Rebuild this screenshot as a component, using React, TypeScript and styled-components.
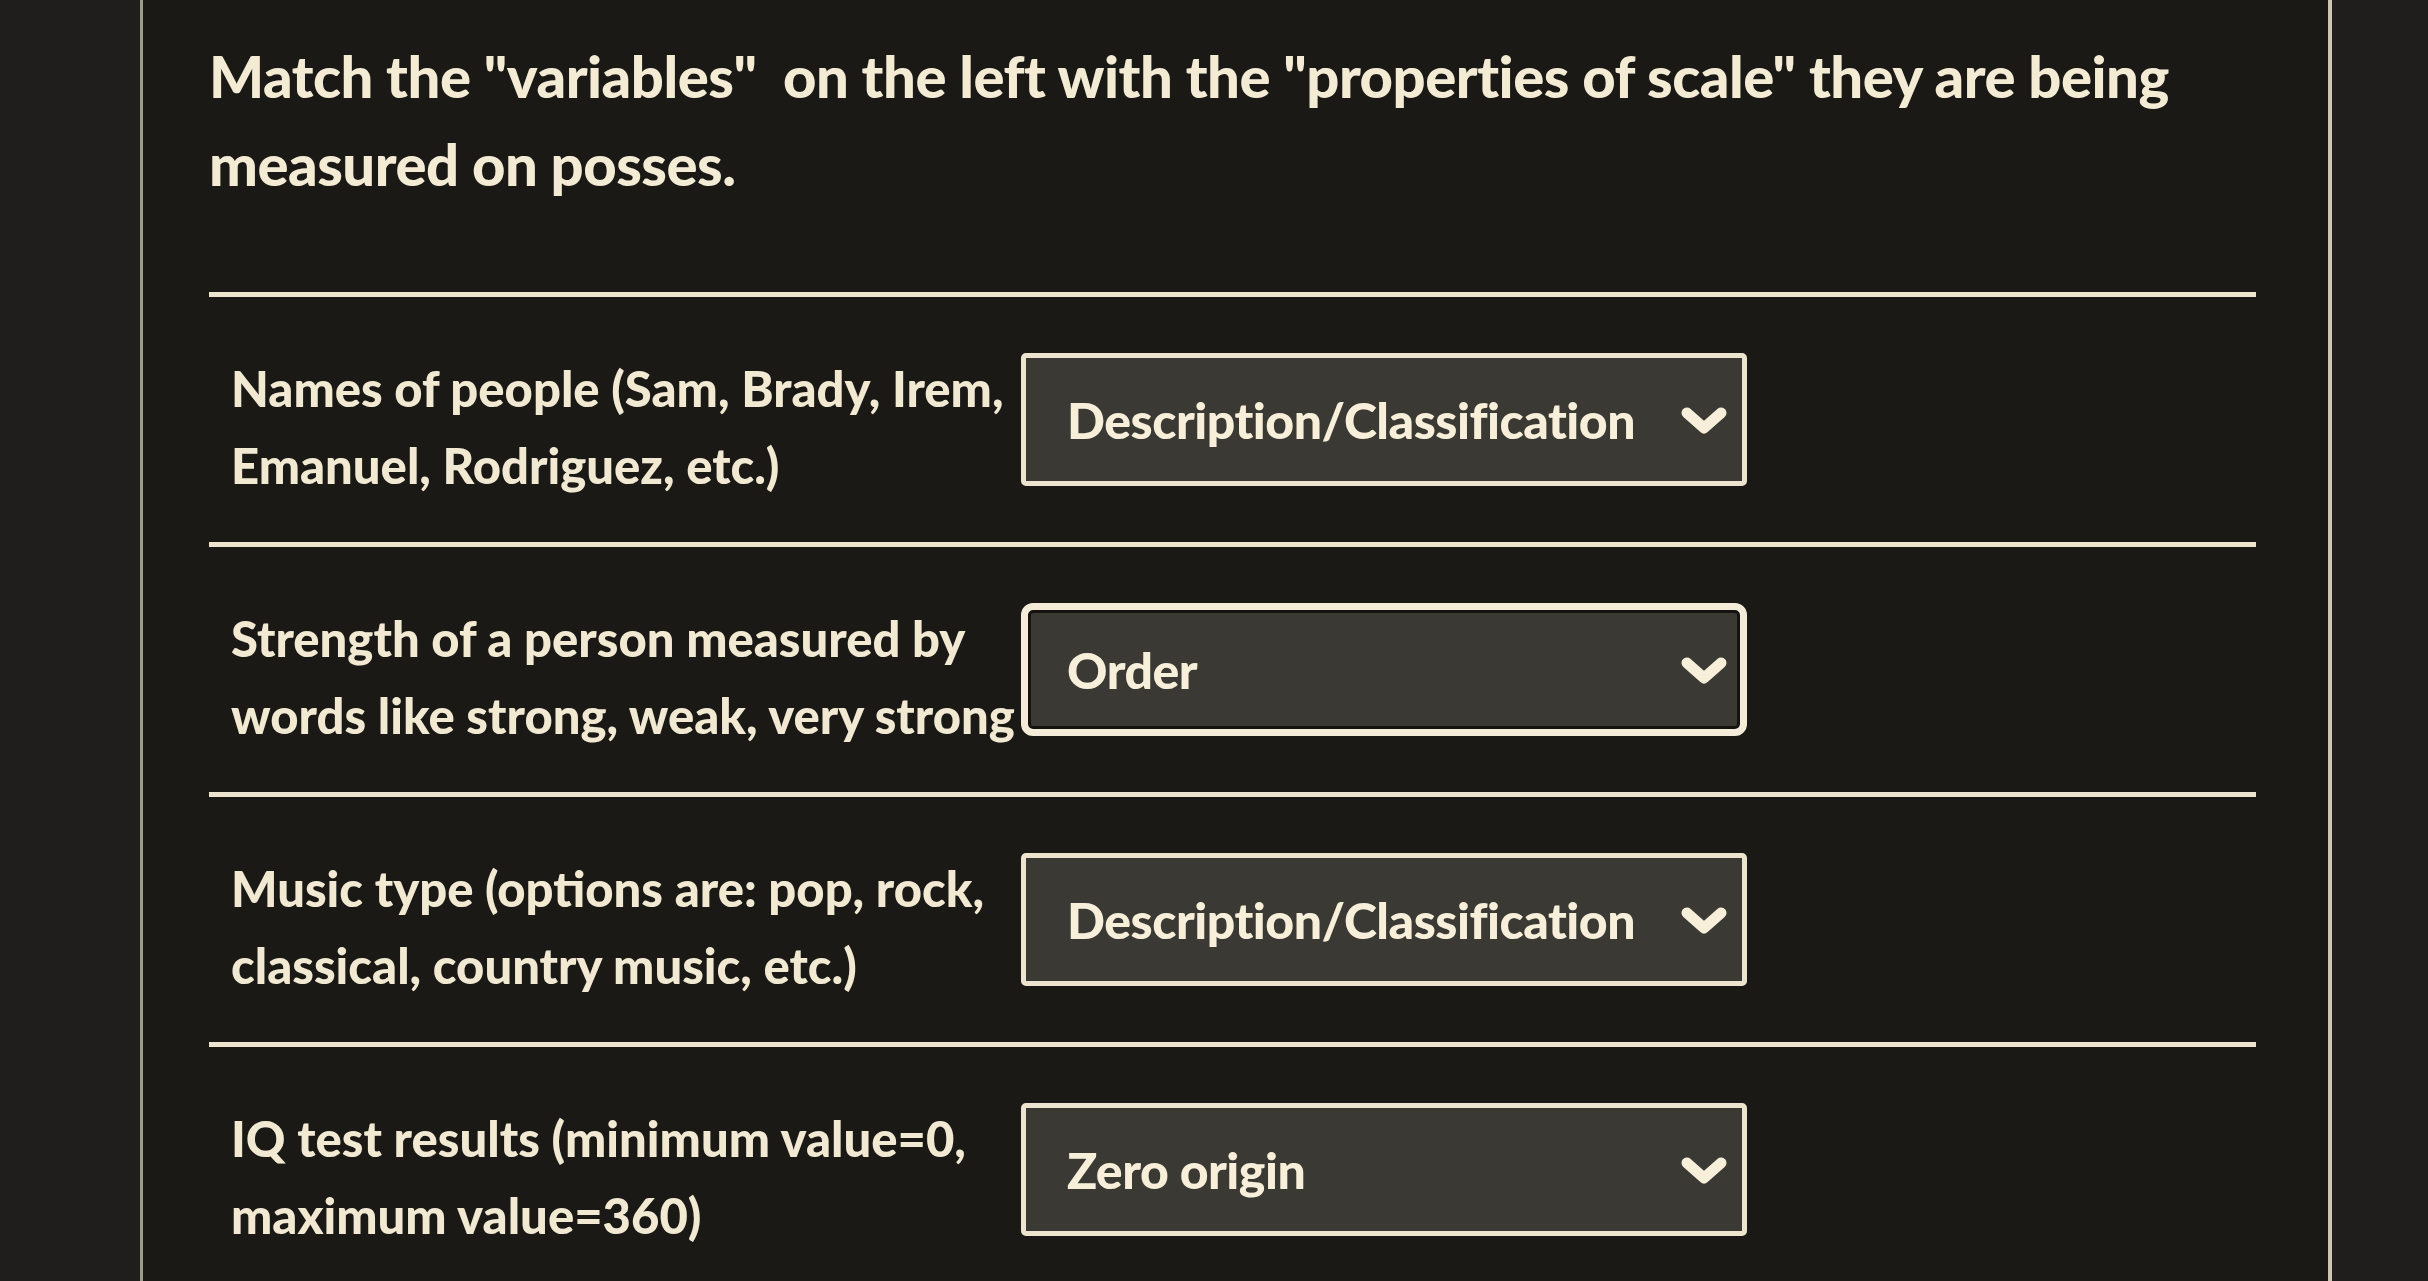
import React from "react";
import styled, { createGlobalStyle, css } from "styled-components";

const GlobalStyle = createGlobalStyle`
  html, body {
    margin: 0;
    padding: 0;
    background: #1d1c19;
  }
  * { box-sizing: border-box; }
`;

const Page = styled.div`
  display: flex;
  min-height: 1281px;
  background: #1d1c19;
  font-family: Lato, "Open Sans", "Liberation Sans", sans-serif;
  color: #f3ead6;
  overflow: hidden;
`;

const Gutter = styled.div<{ $w?: number }>`
  flex: ${(p) => (p.$w ? `0 0 ${p.$w}px` : "1 1 auto")};
  background: #1f1e1c;
`;

const Panel = styled.main`
  flex: 0 0 2192px;
  background: #1a1916;
  border-left: 3px solid #9e9a8e;
  border-right: 4px solid #cbc5b2;
  padding: 32px 72px 0 66px;
`;

const Heading = styled.h1`
  margin: 0 0 84px;
  font-size: 58px;
  line-height: 88px;
  font-weight: 900;
  letter-spacing: -0.5px;
  color: #f4ebd5;
`;

const Row = styled.section`
  display: grid;
  grid-template-columns: 790px 726px;
  align-items: center;
  height: 250px;
  padding-left: 22px;
  border-top: 5px solid #ede4cf;
`;

const Label = styled.div`
  font-size: 49px;
  line-height: 77px;
  font-weight: 900;
  letter-spacing: 0;
  color: #f2e9d3;
  padding-top: 14px;
`;

const Line = styled.span`
  display: block;
  white-space: nowrap;
`;

const Select = styled.div<{ $focused?: boolean }>`
  display: flex;
  align-items: center;
  justify-content: space-between;
  height: 133px;
  padding: 0 14px 0 41px;
  background: #3a3933;
  border: 5px solid #ede4cf;
  border-radius: 5px;
  font-size: 50px;
  font-weight: 900;
  letter-spacing: -0.5px;
  color: #f7efda;
  ${(p) =>
    p.$focused &&
    css`
      border: 7px solid #f4ecd8;
      border-radius: 12px;
      box-shadow: inset 0 0 0 3px #141310;
      padding-left: 39px;
      padding-right: 12px;
    `}
`;

const Chevron = () => (
  <svg width="48" height="32" viewBox="0 0 48 32" aria-hidden="true">
    <polyline
      points="7,9 24,24 41,9"
      fill="none"
      stroke="#f7efda"
      strokeWidth="11"
      strokeLinecap="round"
      strokeLinejoin="round"
    />
  </svg>
);

const items = [
  {
    lines: ["Names of people (Sam, Brady, Irem,", "Emanuel, Rodriguez, etc.)"],
    value: "Description/Classification",
  },
  {
    lines: ["Strength of a person measured by", "words like strong, weak, very strong"],
    value: "Order",
    focused: true,
  },
  {
    lines: ["Music type (options are: pop, rock,", "classical, country music, etc.)"],
    value: "Description/Classification",
  },
  {
    lines: ["IQ test results (minimum value=0,", "maximum value=360)"],
    value: "Zero origin",
  },
];

export default function App() {
  return (
    <>
      <GlobalStyle />
      <Page>
        <Gutter $w={140} />
        <Panel>
          <Heading>
            Match the "variables"&nbsp; on the left with the "properties of scale" they are being measured on posses.
          </Heading>
          {items.map((it, i) => (
            <Row key={i}>
              <Label>
                {it.lines.map((l) => (
                  <Line key={l}>{l}</Line>
                ))}
              </Label>
              <Select $focused={it.focused}>
                <span>{it.value}</span>
                <Chevron />
              </Select>
            </Row>
          ))}
        </Panel>
        <Gutter />
      </Page>
    </>
  );
}
